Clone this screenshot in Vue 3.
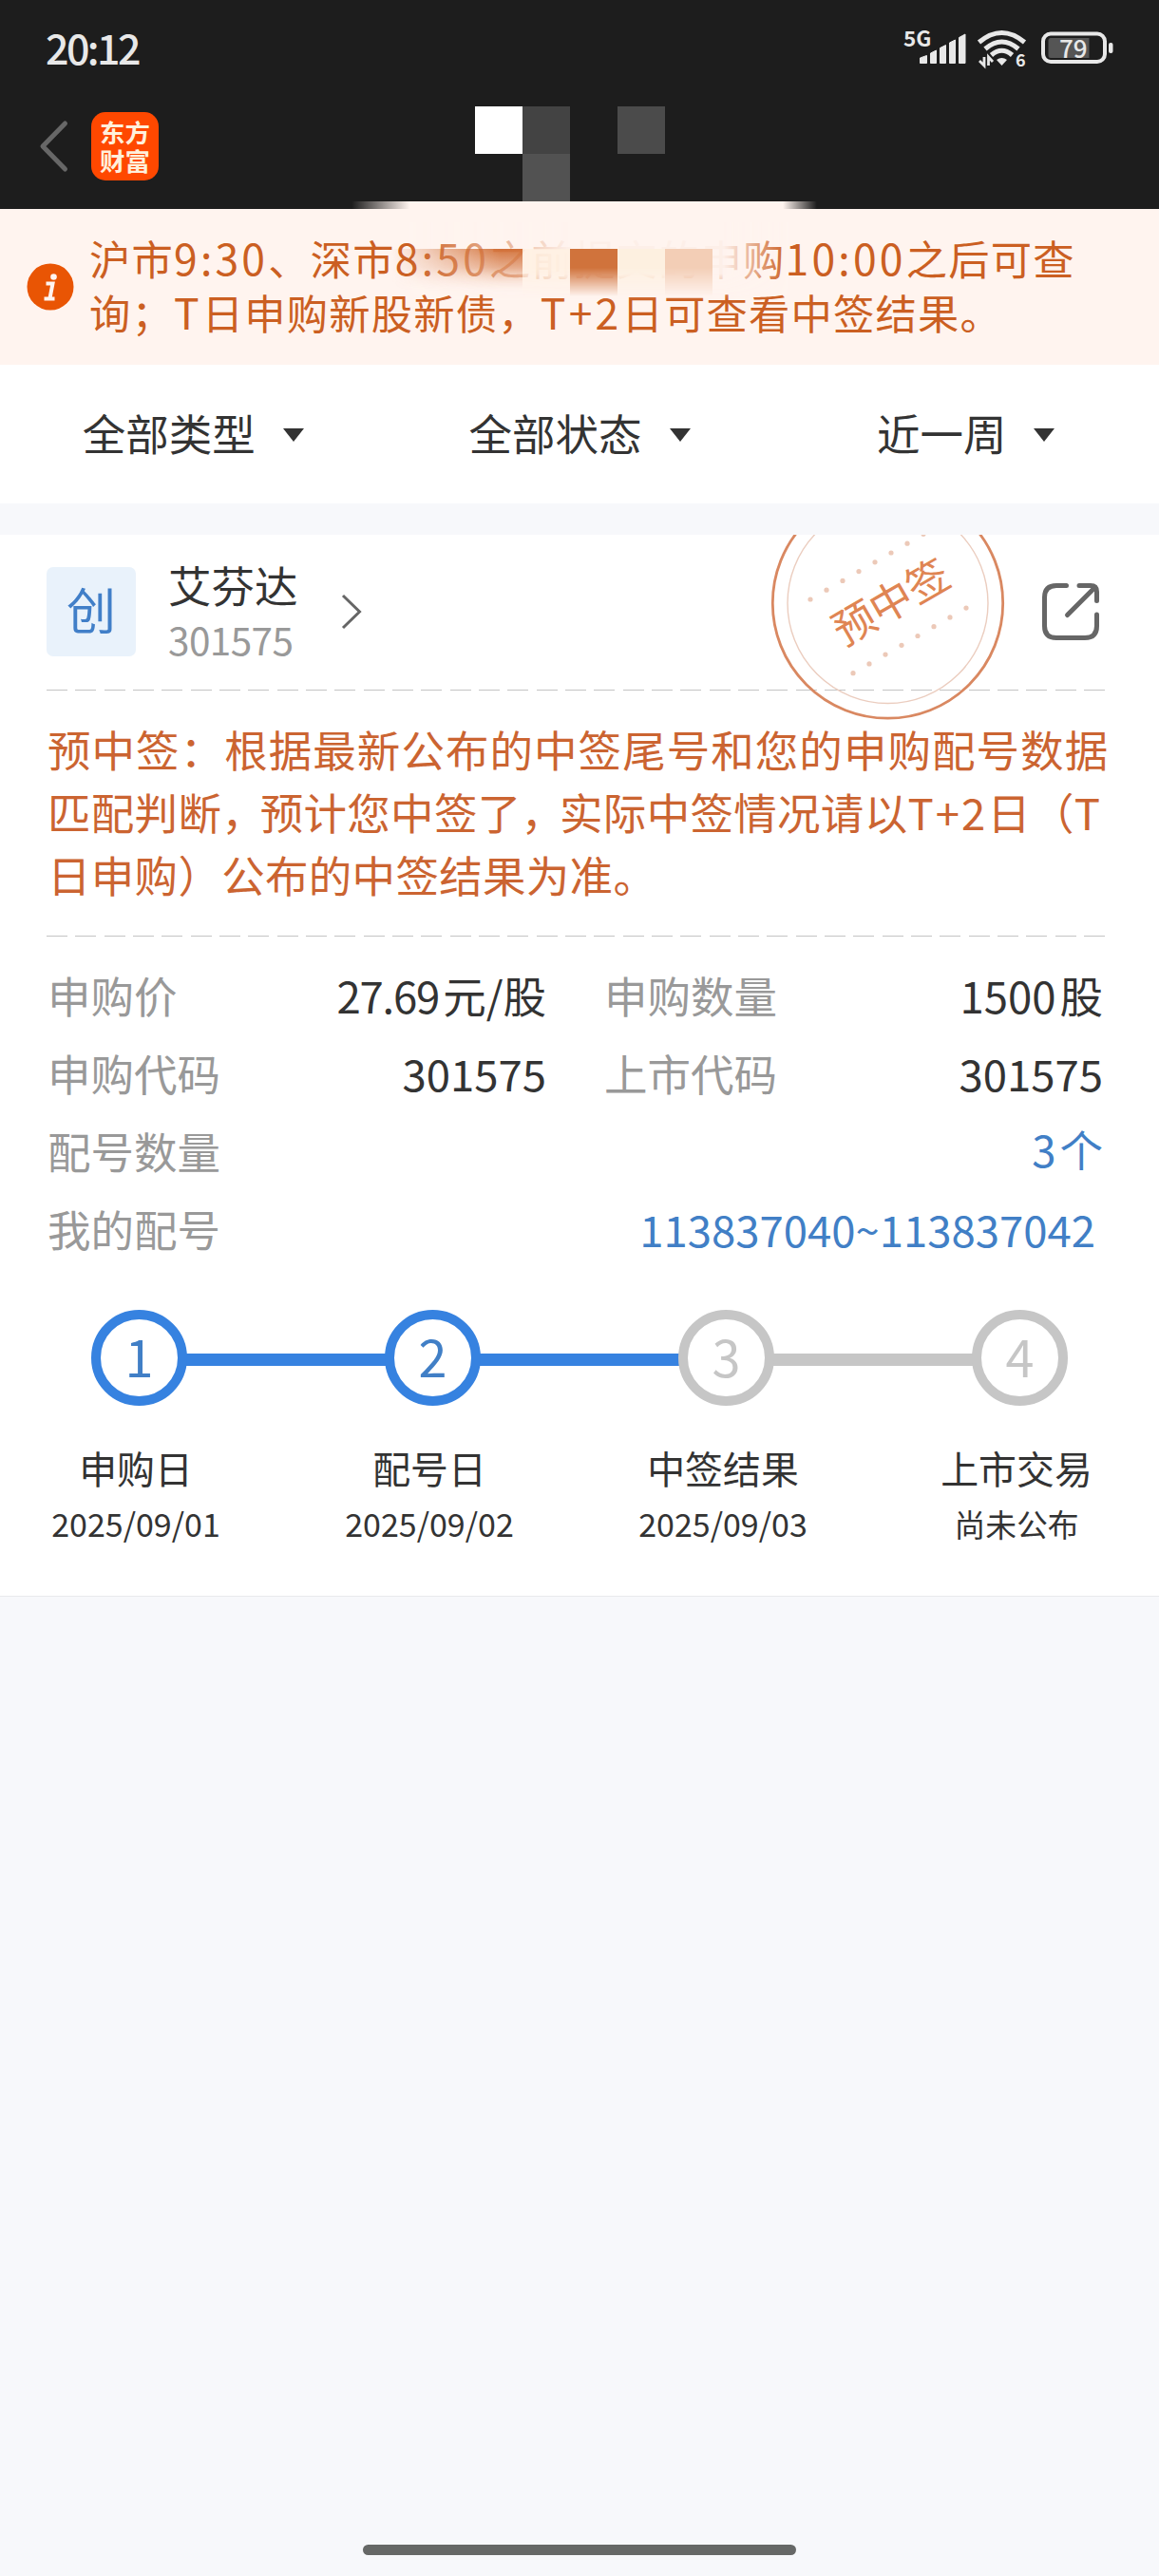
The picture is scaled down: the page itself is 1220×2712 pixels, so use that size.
<template>
  <div class="page">
    <!-- Status bar -->
    <header class="top">
      <div class="status">
        <span class="status__time">20:12</span>
        <svg class="status__icons" width="226" height="50" viewBox="0 0 226 50">
          <text x="0" y="26" class="status__net">5G</text>
          <g fill="#e8e8e8" stroke="#e8e8e8" stroke-width="1" stroke-linejoin="round">
            <path d="M17.5 38 L24.5 35.5 V43.5 H17.5 Z" />
            <path d="M28.5 33 L34.5 30 V43.5 H28.5 Z" />
            <path d="M38.5 27.5 L44.5 24.5 V43.5 H38.5 Z" />
            <path d="M48.5 22 L54.5 19 V43.5 H48.5 Z" />
            <path d="M58.5 16.5 L65 13 V43.5 H58.5 Z" />
          </g>
          <!-- Wifi -->
          <g fill="none" stroke="#e8e8e8" stroke-width="5">
            <path d="M79.5 21.5 Q103.5 1.5 127.5 21.5" />
            <path d="M86 28.5 Q103.5 13.5 121 28.5" />
            <path d="M92.5 35 Q103.5 25.5 114.5 35" />
          </g>
          <path d="M98 40 Q103.5 36 109 40 L103.5 46 Z" fill="#e8e8e8" />
          <path d="M85 37 V46 L80 41 M89.5 46 V37 L94 42" fill="none" stroke="#e8e8e8" stroke-width="2.8" />
          <text x="118" y="46.5" class="status__six">6</text>
          <!-- Battery -->
          <rect x="147" y="12.5" width="65" height="29.5" rx="8" fill="none" stroke="#e8e8e8" stroke-width="4" />
          <path d="M155 17 H195.5 V38 H155 Q152.5 38 152.5 35.5 V19.5 Q152.5 17 155 17 Z" fill="#555" />
          <text x="164" y="37.5" class="status__battery">79</text>
          <rect x="216" y="22" width="4.5" height="11" rx="2" fill="#e8e8e8" />
        </svg>
      </div>

      <div class="nav">
        <svg class="nav__back" width="34" height="58" viewBox="0 0 34 58">
          <path d="M28.5 5 L5 29 L28.5 53" fill="none" stroke="#676767" stroke-width="5" stroke-linecap="round" stroke-linejoin="round" />
        </svg>
        <div class="nav__logo">东方<br />财富</div>
      </div>

      <div class="title-mosaic">
        <i class="title-mosaic__a"></i>
        <i class="title-mosaic__b"></i>
        <i class="title-mosaic__c"></i>
        <i class="title-mosaic__d"></i>
      </div>
    </header>

    <!-- Notice -->
    <section class="notice">
      <svg class="notice__icon" width="50" height="50" viewBox="0 0 50 50">
        <circle cx="25" cy="25" r="24.5" fill="#e95504" />
        <circle cx="28.5" cy="14.5" r="3.3" fill="#fff4ef" />
        <path d="M20.5 21.5 H27.5 L24.5 37 M18.5 37.5 H29.5" fill="none" stroke="#fff4ef" stroke-width="4" />
      </svg>
      <div class="notice__text">
        <p>沪市<b>9:30</b>、深市<b>8:50</b>之前提交的申购<b>10:00</b>之后可查</p>
        <p>询；<b>T</b>日申购新股新债，<b>T+2</b>日可查看中签结果。</p>
      </div>
      <div class="notice__edge"></div>
      <div class="notice__haze"></div>
      <div class="notice__mosaic">
        <i class="m1"></i><i class="m2"></i><i class="m3"></i><i class="m4"></i><i class="m5"></i>
      </div>
    </section>

    <!-- Filters -->
    <nav class="filters">
      <div v-for="f in filters" :key="f" class="filters__item">
        <span>{{ f }}</span>
        <i class="filters__arrow"></i>
      </div>
    </nav>

    <!-- Subscription card -->
    <main class="card">
      <div class="stock">
        <div class="stock__tag">创</div>
        <div class="stock__info">
          <div class="stock__name">艾芬达</div>
          <div class="stock__code">301575</div>
        </div>
        <svg class="stock__more" width="24" height="40" viewBox="0 0 24 40">
          <path d="M3 3 L20.5 20 L3 37" fill="none" stroke="#666" stroke-width="3" />
        </svg>
        <svg class="stock__share" width="64" height="64" viewBox="0 0 64 64">
          <g fill="none" stroke="#666" stroke-width="5" stroke-linecap="round" stroke-linejoin="round">
            <path d="M27.5 4.5 H17 Q4.5 4.5 4.5 17 V47 Q4.5 59.5 17 59.5 H47 Q59.5 59.5 59.5 47 V35" />
            <path d="M41 4.5 H53 Q59.5 4.5 59.5 11 V20.5" />
            <path d="M28.5 35.5 L57.5 6.5" />
          </g>
        </svg>
      </div>

      <svg class="stamp" width="250" height="250" viewBox="0 0 250 250">
        <circle cx="124.5" cy="125" r="121.2" fill="none" stroke="#d98861" stroke-width="2.8" />
        <circle cx="124.5" cy="125" r="105.5" fill="none" stroke="#ebcdbf" stroke-width="1.4" />
        <circle v-for="n in 8" :key="'u' + n" :cx="43 + (n - 1) * 17" :cy="121 - (n - 1) * 9.8" r="2.6" fill="#ecc9b8" />
        <circle v-for="n in 8" :key="'l' + n" :cx="88 + (n - 1) * 17" :cy="198.7 - (n - 1) * 9.8" r="2.6" fill="#ecc9b8" />
        <text x="127.5" y="140" text-anchor="middle" transform="rotate(-30 128 123)" class="stamp__text">预中签</text>
      </svg>

      <div class="dash"></div>

      <div class="tip">
        <p class="tip__first">预中签：根据最新公布的中签尾号和您的申购配号数据</p>
        <p>匹配判断<span class="tip__comma">，</span>预计您中签了<span class="tip__comma">，</span>实际中签情况请以<span class="tip__latin">T+2</span>日（T</p>
        <p>日申购）公布的中签结果为准。</p>
      </div>

      <div class="dash"></div>

      <div class="rows">
        <div v-for="(row, i) in rows" :key="i" class="rows__line">
          <div v-for="cell in row" :key="cell.label" class="rows__cell">
            <span class="rows__label">{{ cell.label }}</span>
            <span class="rows__value" :class="cell.type && 'rows__value--' + cell.type">
              <span class="rows__num">{{ cell.value }}</span><span v-if="cell.unit" class="rows__unit">{{ cell.unit }}</span>
            </span>
          </div>
        </div>
      </div>

      <div class="steps">
        <div v-for="(s, i) in steps" :key="s.name" class="step" :class="{ 'step--done': s.done }">
          <div class="step__rail">
            <span class="step__seg" :class="segClass(i - 1)"></span>
            <span class="step__circle">{{ i + 1 }}</span>
            <span class="step__seg" :class="segClass(i)"></span>
          </div>
          <div class="step__name">{{ s.name }}</div>
          <div class="step__date" :class="{ 'step__date--text': s.pending }">{{ s.date }}</div>
        </div>
      </div>
    </main>

    <footer class="home">
      <span class="home__bar"></span>
    </footer>
  </div>
</template>

<script setup>
const filters = ['全部类型', '全部状态', '近一周']

const rows = [
  [
    { label: '申购价', value: '27.69', unit: '元/股', type: 'price' },
    { label: '申购数量', value: '1500', unit: '股' }
  ],
  [
    { label: '申购代码', value: '301575' },
    { label: '上市代码', value: '301575' }
  ],
  [{ label: '配号数量', value: '3', unit: '个', type: 'link' }],
  [{ label: '我的配号', value: '113837040~113837042', type: 'range' }]
]

const steps = [
  { name: '申购日', date: '2025/09/01', done: true },
  { name: '配号日', date: '2025/09/02', done: true },
  { name: '中签结果', date: '2025/09/03', done: false },
  { name: '上市交易', date: '尚未公布', done: false, pending: true }
]

// segment i joins step i and step i + 1
function segClass(i) {
  if (i < 0 || i >= steps.length - 1) return 'step__seg--none'
  return steps[i].done ? 'step__seg--on' : ''
}
</script>

<style>
body {
  background: #f7f8fb;
}
</style>

<style scoped>
.page {
  display: flex;
  flex-direction: column;
  width: 1220px;
  height: 2712px;
  background: #f7f8fb;
  color: #333;
  font-family: 'Noto Sans CJK SC', sans-serif;
  font-size: 45.5px;
  overflow: hidden;
}

p {
  margin: 0;
}

/* ── Top bar ─────────────────────────────────────── */
.top {
  position: relative;
  height: 220px;
  background: #1d1d1d;
}

.status {
  display: flex;
  justify-content: space-between;
  align-items: center;
  height: 97px;
  padding: 0 43px 0 48px;
}

.status__time {
  color: #e8e8e8;
  font-size: 43px;
  font-weight: 500;
  line-height: 60px;
  letter-spacing: -2.6px;
}

.status__icons {
  margin-bottom: 1px;
}

.status__net {
  fill: #e8e8e8;
  font: 700 22.5px 'Noto Sans CJK SC', sans-serif;
}

.status__six {
  fill: #e8e8e8;
  font: 700 18px 'Noto Sans CJK SC', sans-serif;
}

.status__battery {
  fill: #e8e8e8;
  font: 500 26px 'Noto Sans CJK SC', sans-serif;
}

.nav {
  display: flex;
  align-items: center;
  gap: 22px;
  padding: 21px 0 0 40px;
}

.nav__logo {
  width: 71px;
  height: 72px;
  padding-top: 6px;
  box-sizing: border-box;
  border-radius: 15px;
  background: #ff4800;
  color: #fff0dc;
  font-size: 26.5px;
  font-weight: 700;
  line-height: 30px;
  text-align: center;
}

.title-mosaic {
  position: absolute;
  left: 500px;
  top: 112px;
  display: grid;
  grid-template-columns: repeat(4, 50px);
  grid-template-rows: repeat(2, 50px);
}

.title-mosaic__a { background: #fff; grid-area: 1 / 1; }
.title-mosaic__b { background: #434343; grid-area: 1 / 2; }
.title-mosaic__c { background: #4b4b4b; grid-area: 1 / 4; }
.title-mosaic__d { background: #525252; grid-area: 2 / 2; }

/* ── Notice ──────────────────────────────────────── */
.notice {
  position: relative;
  display: flex;
  gap: 16px;
  height: 164px;
  padding: 22px 0 0 28px;
  box-sizing: border-box;
  background: #fff4ef;
  color: #cb5f22;
}

.notice__icon {
  margin-top: 35px;
}

.notice__text {
  margin-top: 1px;
  white-space: nowrap;
  font-size: 43.3px;
  letter-spacing: 1.2px;
  line-height: 57px;
}

.notice__text b {
  font-weight: 400;
  font-size: 44.5px;
  letter-spacing: 3.2px;
  line-height: 1;
}

.notice__edge {
  position: absolute;
  left: 360px;
  top: -8px;
  width: 510px;
  height: 8px;
  background: linear-gradient(90deg, #1d1d1d 2%, #fff4ef 14%, #fff4ef 91%, #1d1d1d 98%);
}

.notice__haze {
  position: absolute;
  left: 430px;
  top: 14px;
  width: 400px;
  height: 82px;
  background: #fff4ef;
  opacity: 0.97;
  mask-image: linear-gradient(90deg, transparent, #000 42%, #000 83%, transparent), linear-gradient(#000 66%, transparent);
  mask-composite: intersect;
}

.notice__mosaic {
  position: absolute;
  left: 400px;
  top: 42px;
  display: grid;
  grid-template-columns: 150px repeat(4, 50px);
  height: 50px;
  mask-image: linear-gradient(#000 40%, transparent);
}

.m1 {
  background: linear-gradient(90deg, rgba(207, 104, 45, 0) 8%, rgba(207, 104, 45, 0.9) 85%);
  mask-image: linear-gradient(#000, transparent 90%);
}

.m2 { background: rgba(255, 240, 224, 0.75); }
.m3 { background: rgba(207, 112, 56, 0.98); }
.m4 { background: #fdf0e0; }
.m5 { background: #f3ceb6; }

/* ── Filters ─────────────────────────────────────── */
.filters {
  display: grid;
  grid-template-columns: repeat(3, 1fr);
  height: 146px;
  margin-bottom: 33px;
  background: #fff;
}

.filters__item {
  display: flex;
  align-items: center;
  justify-content: center;
  gap: 29px;
  padding-bottom: 5px;
}

.filters__arrow {
  margin-top: 6px;
  border: 11.5px solid transparent;
  border-top: 14px solid #333;
  border-bottom: 0;
}

/* ── Card ────────────────────────────────────────── */
.card {
  position: relative;
  height: 1117px;
  background: #fff;
  border-bottom: 1px solid #e9eaec;
  overflow: hidden;
}

.stock {
  display: flex;
  align-items: center;
  height: 162px;
  padding: 0 61px 1px 49px;
}

.stock__tag {
  width: 94px;
  height: 94px;
  border-radius: 7px;
  background: #e9f2fb;
  color: #417fc8;
  font-size: 52px;
  line-height: 88px;
  text-align: center;
}

.stock__info {
  width: 140px;
  margin-left: 34px;
  padding-bottom: 1px;
  line-height: 58px;
  white-space: nowrap;
}

.stock__code {
  color: #999;
  font-size: 40.5px;
  letter-spacing: -0.6px;
}

.stock__more {
  margin-left: 41px;
}

.stock__share {
  margin-left: auto;
}

.stamp {
  position: absolute;
  left: 810px;
  top: -53px;
}

.stamp__text {
  fill: #df8553;
  font: 400 44.5px 'Noto Sans CJK SC', sans-serif;
}

.dash {
  width: 1114px;
  height: 1px;
  margin-left: 49px;
  background: repeating-linear-gradient(90deg, #c4c4c4 0 22px, transparent 22px 30.33px);
}

.tip {
  padding: 28px 0 32px 50px;
  color: #cb6431;
  letter-spacing: 0.3px;
  line-height: 66px;
  white-space: nowrap;
}

.tip__first {
  letter-spacing: 1.05px;
}

.tip__comma {
  letter-spacing: -5px;
}

.tip__latin {
  letter-spacing: 2px;
}

/* ── Detail rows ─────────────────────────────────── */
.rows {
  padding: 21px 59px 0 50px;
}

.rows__line {
  display: flex;
  gap: 61px;
  height: 82px;
  line-height: 82px;
}

.rows__line:first-child {
  height: 81px;
  line-height: 81px;
}

.rows__cell {
  display: flex;
  flex: 1;
  justify-content: space-between;
  white-space: nowrap;
}

.rows__label {
  color: #999;
}

.rows__unit {
  margin-left: 4px;
}

.rows__value--price .rows__num {
  letter-spacing: -1.2px;
}

.rows__value--link,
.rows__value--range {
  color: #417fc6;
}

.rows__value--link {
  margin-top: -2px;
}

.rows__value--range {
  padding-right: 8px;
}

/* ── Steps ───────────────────────────────────────── */
.steps {
  display: grid;
  grid-template-columns: repeat(4, 309px);
  margin: 45px 0 0 -8px;
  text-align: center;
}

.step__rail {
  display: flex;
  align-items: center;
}

.step__seg {
  flex: 1;
  height: 13px;
  margin: 4px -3px 0;
  background: #c6c6c6;
}

.step__seg--on {
  background: #3682e0;
}

.step__seg--none {
  background: transparent;
}

.step__circle {
  position: relative;
  width: 101px;
  height: 101px;
  box-sizing: border-box;
  border: 10px solid #c6c6c6;
  border-radius: 50%;
  background: #fff;
  color: #c6c6c6;
  font-size: 54px;
  line-height: 76px;
}

.step--done .step__circle {
  border-color: #3682e0;
  color: #417fc6;
}

.step__name {
  margin: 40px 7px 0 0;
  font-size: 39.9px;
  line-height: 50px;
}

.step__date {
  margin: 14px 7px 0 0;
  font-size: 34px;
  line-height: 40px;
}

.step__date--text {
  font-size: 32.8px;
}

/* ── Home indicator ──────────────────────────────── */
.home {
  display: flex;
  justify-content: center;
  margin-top: auto;
  padding-bottom: 22px;
}

.home__bar {
  width: 456px;
  height: 11px;
  border-radius: 6px;
  background: #666867;
}
</style>
